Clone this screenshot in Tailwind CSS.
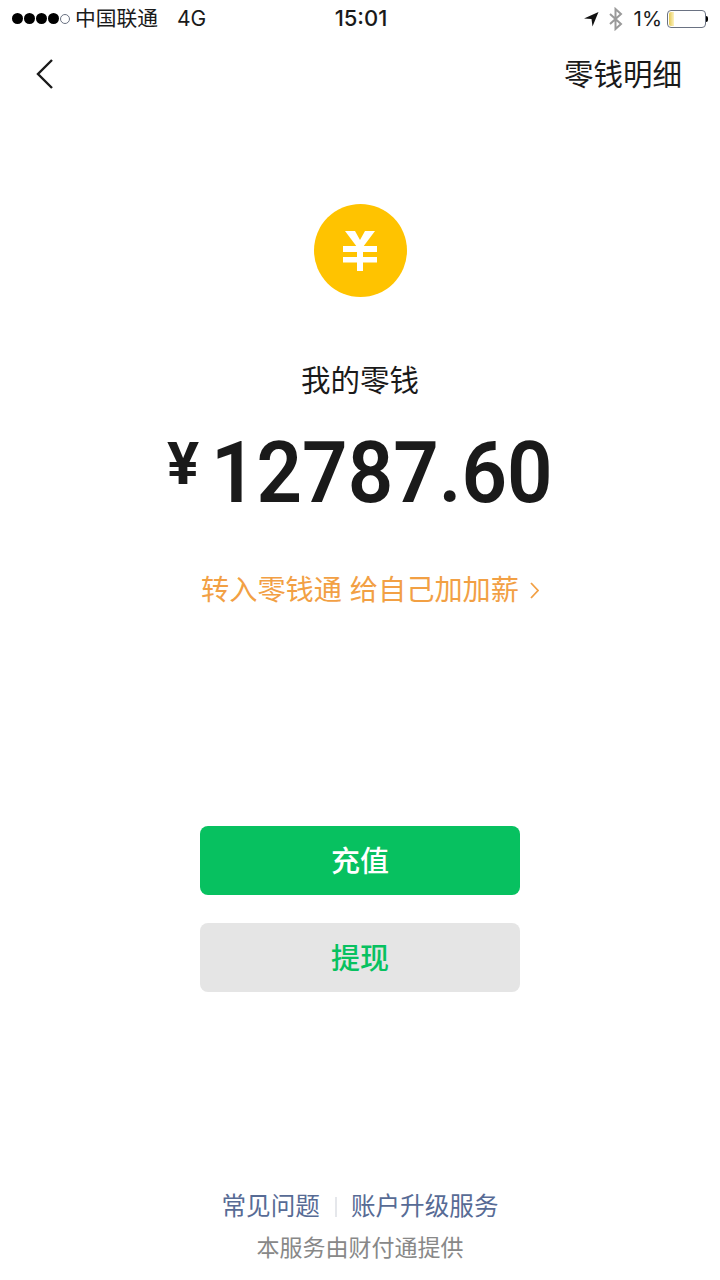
<!DOCTYPE html>
<html lang="zh-CN">
<head>
  <meta charset="UTF-8" />
  <title>我的零钱</title>
  <script src="https://cdn.jsdelivr.net/npm/@tailwindcss/browser@4"></script>
</head>
<body class="bg-white">
  <div class="w-[720px] h-[1280px] flex flex-col items-center overflow-hidden bg-white text-[#1a1a1a] font-['Inter','Noto_Sans_CJK_SC',sans-serif]">

    <!-- status bar -->
    <div class="w-full h-[37px] flex items-center justify-between pl-[12px] pr-[12px]">
      <div class="flex-1 flex items-center">
        <div class="flex items-center gap-[1px]">
          <span class="w-[11px] h-[11px] rounded-full bg-black"></span>
          <span class="w-[11px] h-[11px] rounded-full bg-black"></span>
          <span class="w-[11px] h-[11px] rounded-full bg-black"></span>
          <span class="w-[11px] h-[11px] rounded-full bg-black"></span>
          <span class="w-[10px] h-[10px] rounded-full border border-gray-500"></span>
        </div>
        <span class="ml-[5px] text-[20.75px]">中国联通</span>
        <span class="ml-[19px] text-[21px]">4G</span>
      </div>
      <div class="font-medium text-[22px] pl-[2px]">15:01</div>
      <div class="flex-1 flex items-center justify-end">
        <svg width="16" height="16" viewBox="0 0 16 16" class="mr-[9px]"><path d="M15.5 1 L1 7.5 L8.5 8 L9.5 15.5 Z" fill="#111"/></svg>
        <svg width="15" height="24" viewBox="0 0 15 24" fill="none" stroke="#9a9a9a" stroke-width="2" class="mr-[11px]"><path d="M2 7 L13 17 L7.5 22 V2 L13 7 L2 17"/></svg>
        <span class="text-[20.5px] pt-[1px]">1%</span>
        <div class="ml-[5px] w-[39px] h-[18px] rounded-[4px] border border-gray-500 p-[1px]"><div class="w-[5px] h-full bg-linear-to-r from-[#e5c94f] to-[#fdf3c0] rounded-l-[2px]"></div></div>
        <div class="w-[2px] h-[6px] bg-black rounded-r-sm"></div>
      </div>
    </div>

    <!-- nav -->
    <div class="w-full h-[74px] flex items-center justify-between pl-[36px] pr-[38px]">
      <svg width="18" height="30" viewBox="0 0 18 30" fill="none" stroke="#1a1a1a" stroke-width="2.4"><path d="M16 1 L2 15 L16 29"/></svg>
      <span class="text-[29.5px]">零钱明细</span>
    </div>

    <!-- coin -->
    <div class="mt-[93px] w-[93px] h-[93px] rounded-full bg-[#ffc300] flex items-center justify-center">
      <svg width="34" height="40" viewBox="0 0 34 40" fill="#fff"><path d="M2 0 H12 L17 9 L22 0 H32 L20 16 H14 Z"/><rect x="0" y="15" width="34" height="6"/><rect x="0" y="26" width="34" height="5.5"/><rect x="14" y="15" width="6" height="25"/></svg>
    </div>

    <div class="mt-[61px] text-[29.5px] leading-[44px]">我的零钱</div>

    <!-- amount -->
    <div class="mt-[29px] flex items-start font-['Roboto',sans-serif] leading-none">
      <span class="text-[60px] mt-[3px] mr-[12px] font-bold">¥</span>
      <span class="text-[85px] font-semibold origin-left scale-x-[0.938] mr-[-22px]">12787.60</span>
    </div>

    <div class="mt-[53px] pl-[20px] flex items-center text-[28.2px] text-[#f2a044]">
      <span>转入零钱通 给自己加加薪</span>
      <svg width="9" height="17" viewBox="0 0 9 17" fill="none" stroke="#f2a044" stroke-width="1.8" class="ml-[11px]"><path d="M1 1 L8 8.5 L1 16"/></svg>
    </div>

    <!-- buttons -->
    <div class="mt-[215px] w-[320px] h-[69px] pt-[2px] rounded-[8px] bg-[#07c160] text-white text-[29px] font-medium flex items-center justify-center">充值</div>
    <div class="mt-[28px] w-[320px] h-[69px] pt-[2px] rounded-[8px] bg-[#e5e5e5] text-[#07c160] text-[29px] font-medium flex items-center justify-center">提现</div>

    <!-- footer -->
    <div class="mt-[196px] flex items-center text-[24.6px] text-[#576b95]">
      <span>常见问题</span>
      <span class="ml-[15px] mr-[14px] w-[2px] h-[20px] bg-gray-200"></span>
      <span>账户升级服务</span>
    </div>
    <div class="mt-[6px] text-[23px] text-[#888]">本服务由财付通提供</div>
  </div>
</body>
</html>
